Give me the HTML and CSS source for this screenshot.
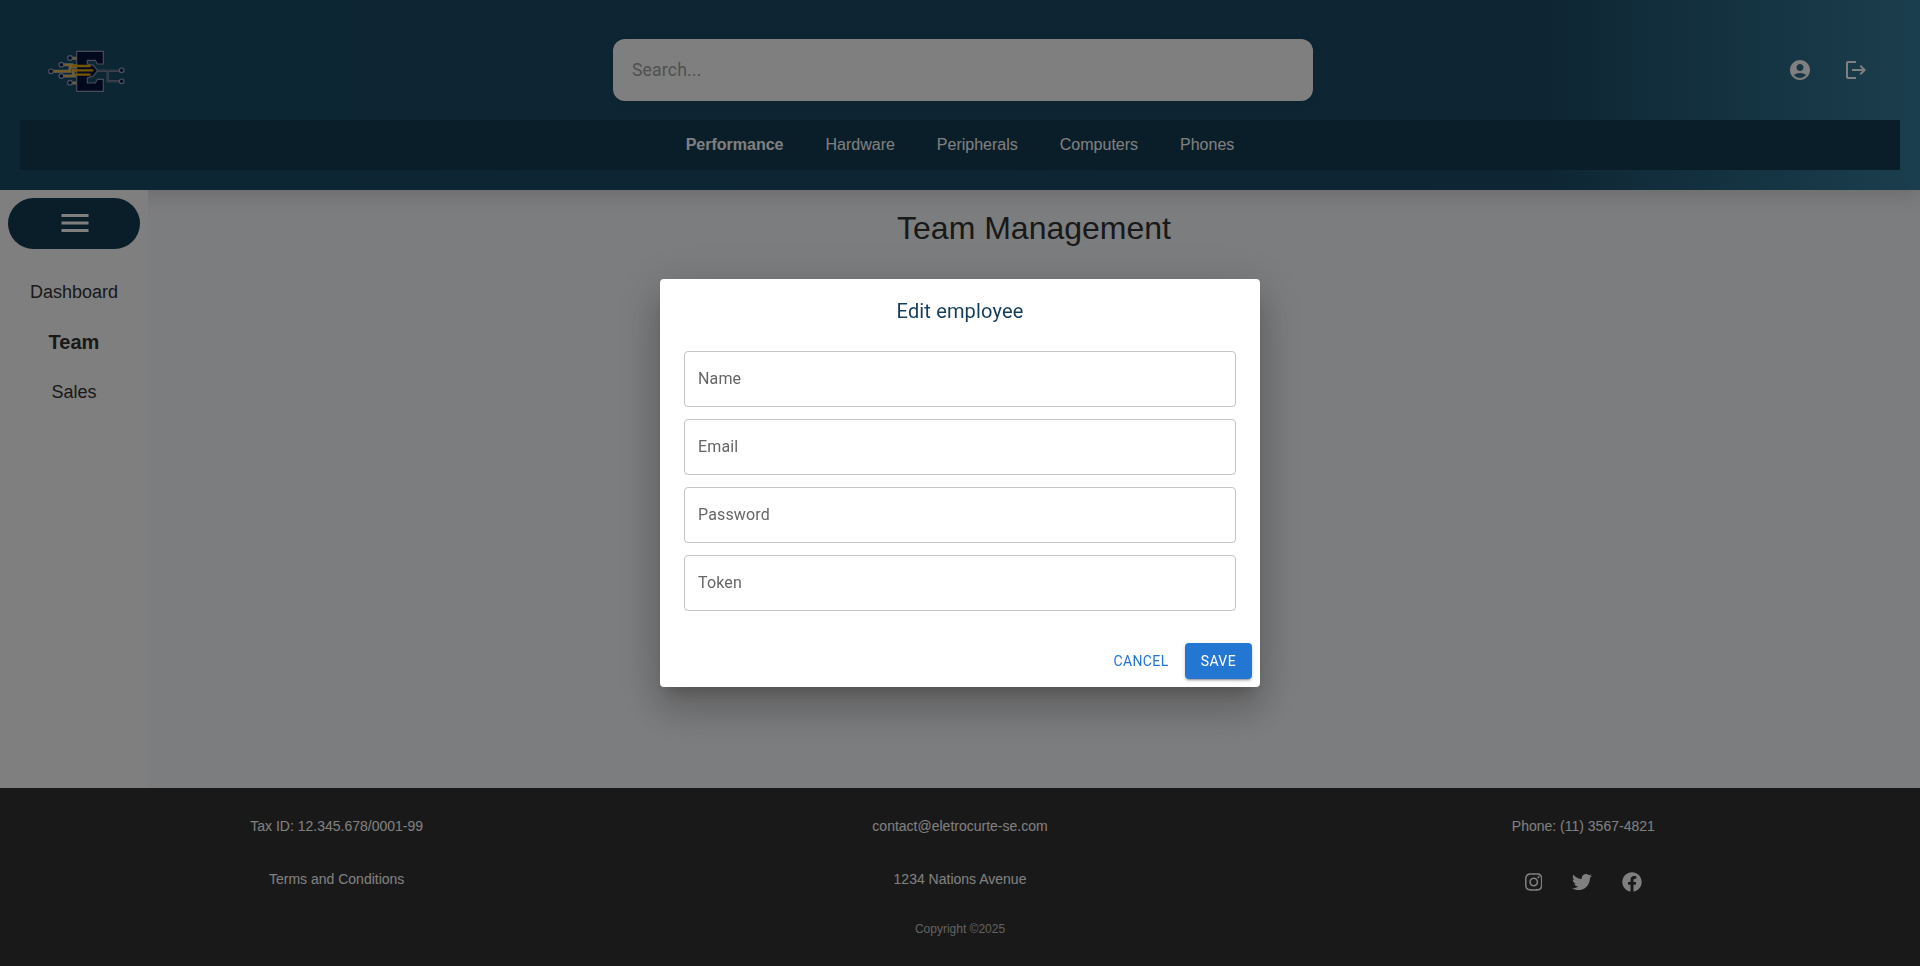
FILE: index.html
```html
<!DOCTYPE html>
<html lang="en">
<head>
<meta charset="utf-8">
<title>Team Management</title>
<link rel="stylesheet" href="styles.css">
</head>
<body>
<div class="page">
  <header class="header">
    <div class="header-row">
      <a class="logo" href="#">
        <svg width="100" height="65" viewBox="0 0 300 195" fill="none">
          <g stroke="#b9bcc6" stroke-width="9">
            <path d="M33 94H90V80H150M64 74H100M64 108H100V91H155M100 108H150M90 55H112M90 129H112"/>
          </g>
          <g stroke="#9aa3b8" stroke-width="6">
            <path d="M172 92H245M203 92V124H245"/>
          </g>
          <path d="M172 92H245M203 92V124H245" stroke="#3a4466" stroke-width="2"/>
          <path d="M110 34H190V72H172L166 61H142V72L160 76L173 92L160 108L142 114V129H166L172 118H190V154H110Z" fill="#04123f" stroke="#8f9ab0" stroke-width="3.5"/>
          <g stroke="#f0b93a" stroke-width="5">
            <path d="M36 94H90V76M64 75H112M64 108H100V91H112M95 55H109M95 129H109"/>
          </g>
          <g stroke="#e6aa08" stroke-width="7">
            <path d="M96 78H152M98 91H160M104 104H152"/>
          </g>
          <g fill="#071a4a" stroke="#9aa5bd" stroke-width="3.5">
            <circle cx="90" cy="54" r="7"/><circle cx="64" cy="74" r="7"/><circle cx="33" cy="94" r="7"/><circle cx="64" cy="108" r="7"/><circle cx="90" cy="128" r="7"/><circle cx="245" cy="91" r="7"/><circle cx="245" cy="124" r="7"/>
          </g>
        </svg>
      </a>
      <input class="search" type="text" placeholder="Search...">
      <div class="header-actions">
        <button class="icon-button"><svg width="24" height="24" viewBox="0 0 24 24"><path d="M12 2C6.48 2 2 6.48 2 12s4.48 10 10 10 10-4.48 10-10S17.52 2 12 2zm0 4c1.93 0 3.5 1.57 3.5 3.5S13.93 13 12 13s-3.5-1.57-3.5-3.5S10.07 6 12 6zm0 14c-2.03 0-4.43-.82-6.14-2.88C7.55 15.8 9.68 15 12 15s4.45.8 6.14 2.12C16.43 19.18 14.03 20 12 20z"/></svg></button>
        <button class="icon-button"><svg width="24" height="24" viewBox="0 0 24 24"><path d="m17 7-1.41 1.41L18.17 11H8v2h10.17l-2.58 2.58L17 17l5-5zM4 5h8V3H4c-1.1 0-2 .9-2 2v14c0 1.1.9 2 2 2h8v-2H4V5z"/></svg></button>
      </div>
    </div>
    <nav class="nav">
      <a class="nav-link active" href="#">Performance</a>
      <a class="nav-link" href="#">Hardware</a>
      <a class="nav-link" href="#">Peripherals</a>
      <a class="nav-link" href="#">Computers</a>
      <a class="nav-link" href="#">Phones</a>
    </nav>
  </header>
  <div class="body">
    <aside class="sidebar">
      <button class="menu-button"><svg width="36" height="36" viewBox="0 0 24 24"><path d="M3 18h18v-2H3v2zm0-5h18v-2H3v2zm0-7v2h18V6H3z"/></svg></button>
      <nav class="side-nav">
        <a class="side-link" href="#">Dashboard</a>
        <a class="side-link active" href="#">Team</a>
        <a class="side-link" href="#">Sales</a>
      </nav>
    </aside>
    <main class="main">
      <h1 class="title">Team Management</h1>
    </main>
  </div>
  <footer class="footer">
    <div class="footer-grid">
      <span>Tax ID: 12.345.678/0001-99</span>
      <span>contact@eletrocurte-se.com</span>
      <span>Phone: (11) 3567-4821</span>
      <span>Terms and Conditions</span>
      <span>1234 Nations Avenue</span>
      <div class="social">
        <svg width="17.5" height="20" viewBox="0 0 448 512"><path d="M224.1 141c-63.6 0-114.9 51.3-114.9 114.9s51.3 114.9 114.9 114.9S339 319.5 339 255.9 287.7 141 224.1 141zm0 189.6c-41.1 0-74.7-33.5-74.7-74.7s33.5-74.7 74.7-74.7 74.7 33.5 74.7 74.7-33.6 74.7-74.7 74.7zm146.4-194.3c0 14.9-12 26.8-26.8 26.8-14.9 0-26.8-12-26.8-26.8s12-26.8 26.8-26.8 26.8 12 26.8 26.8zm76.1 27.2c-1.7-35.9-9.9-67.7-36.2-93.9-26.2-26.2-58-34.4-93.9-36.2-37-2.1-147.9-2.1-184.9 0-35.8 1.7-67.6 9.9-93.9 36.1s-34.4 58-36.2 93.9c-2.1 37-2.1 147.9 0 184.9 1.7 35.9 9.9 67.7 36.2 93.9s58 34.4 93.9 36.2c37 2.1 147.9 2.1 184.9 0 35.9-1.7 67.7-9.9 93.9-36.2 26.2-26.2 34.4-58 36.2-93.9 2.1-37 2.1-147.8 0-184.8zM398.8 388c-7.8 19.6-22.9 34.7-42.6 42.6-29.5 11.7-99.5 9-132.1 9s-102.7 2.6-132.1-9c-19.6-7.8-34.7-22.9-42.6-42.6-11.7-29.5-9-99.5-9-132.1s-2.6-102.7 9-132.1c7.8-19.6 22.9-34.7 42.6-42.6 29.5-11.7 99.5-9 132.1-9s102.7-2.6 132.1 9c19.6 7.8 34.7 22.9 42.6 42.6 11.7 29.5 9 99.5 9 132.1s2.7 102.7-9 132.1z"/></svg>
        <svg width="20" height="20" viewBox="0 0 512 512"><path d="M459.37 151.716c.325 4.548.325 9.097.325 13.645 0 138.72-105.583 298.558-298.558 298.558-59.452 0-114.68-17.219-161.137-47.106 8.447.974 16.568 1.299 25.34 1.299 49.055 0 94.213-16.568 130.274-44.832-46.132-.975-84.792-31.188-98.112-72.772 6.498.974 12.995 1.624 19.818 1.624 9.421 0 18.843-1.3 27.614-3.573-48.081-9.747-84.143-51.98-84.143-102.985v-1.299c13.969 7.797 30.214 12.67 47.431 13.319-28.264-18.843-46.781-51.005-46.781-87.391 0-19.492 5.197-37.36 14.294-52.954 51.655 63.675 129.3 105.258 216.365 109.807-1.624-7.797-2.599-15.918-2.599-24.04 0-57.828 46.782-104.934 104.934-104.934 30.213 0 57.502 12.67 76.67 33.137 23.715-4.548 46.456-13.32 66.599-25.34-7.798 24.366-24.366 44.833-46.132 57.827 21.117-2.273 41.584-8.122 60.426-16.243-14.292 20.791-32.161 39.308-52.628 54.253z"/></svg>
        <svg width="20" height="20" viewBox="0 0 512 512"><path d="M504 256C504 119 393 8 256 8S8 119 8 256c0 123.78 90.69 226.38 209.25 245V327.69h-63V256h63v-54.64c0-62.15 37-96.48 93.67-96.48 27.14 0 55.52 4.84 55.52 4.84v61h-31.28c-30.8 0-40.41 19.12-40.41 38.77V256h68.78l-11 71.69h-57.78V501C413.31 482.38 504 379.78 504 256z"/></svg>
      </div>
    </div>
    <p class="copyright">Copyright ©2025</p>
  </footer>
</div>
<div class="backdrop">
  <form class="dialog">
    <h2 class="dialog-title">Edit employee</h2>
    <div class="dialog-content">
      <input class="field" type="text" placeholder="Name">
      <input class="field" type="text" placeholder="Email">
      <input class="field" type="text" placeholder="Password">
      <input class="field" type="text" placeholder="Token">
    </div>
    <div class="dialog-actions">
      <button class="button" type="button">CANCEL</button>
      <button class="button primary" type="button">SAVE</button>
    </div>
  </form>
</div>
</body>
</html>
```
FILE: styles.css
```css
* { box-sizing: border-box; }
body {
  margin: 0;
  font-family: "Liberation Sans", Arial, sans-serif;
  color: #333;
  overflow: hidden;
}
a { color: inherit; text-decoration: none; }
button { border: 0; background: none; padding: 0; font: inherit; }
svg { display: block; }

.page { display: flex; flex-direction: column; height: 966px; }

.header {
  height: 190px;
  padding: 20px;
  background: linear-gradient(90deg, #1b4c66 0%, #1c4b66 80%, #367d9c 100%);
  box-shadow: 0 4px 20px rgba(0, 0, 0, .15);
  position: relative;
}
.header-row {
  height: 100px;
  padding: 0 24px 0 20px;
  display: grid;
  grid-template-columns: 1fr 700px 1fr;
  align-items: center;
}
.logo { padding-top: 5px; }
.search {
  width: 700px;
  height: 62px;
  margin-left: 5px;
  padding: 0 19px;
  border: 0;
  border-radius: 12px;
  background: #fff;
  font: 17.6px Roboto, sans-serif;
  letter-spacing: .00938em;
  box-shadow: 0 2px 8px rgba(0, 0, 0, .1);
}
.search::placeholder { color: #a2a2a2; }
.header-actions { display: flex; justify-content: flex-end; gap: 16px; }
.icon-button { padding: 8px; fill: #fff; }
.nav {
  height: 50px;
  display: flex;
  justify-content: center;
  align-items: center;
  gap: 42px;
  background: #153d53;
  color: #fff;
  font-size: 16px;
}
.nav-link.active { font-weight: 700; }

.body { flex: 1; display: flex; }
.sidebar {
  width: 148px;
  padding: 8px;
  background: #fff;
  position: relative;
}
.menu-button {
  width: 132px;
  height: 51px;
  padding: 0 0 .5px 1px;
  border-radius: 25.5px;
  display: flex;
  align-items: center;
  justify-content: center;
  background: #153d53;
  fill: #fff;
}
.side-nav { padding-top: 18px; display: flex; flex-direction: column; }
.side-link {
  height: 50px;
  display: flex;
  align-items: center;
  justify-content: center;
  font-size: 18px;
}
.side-link.active { font-size: 20px; font-weight: 700; }
.main { flex: 1; background: #f9fafd; }
.title {
  margin: 20px 0 0;
  text-align: center;
  font-size: 32px;
  line-height: 37px;
  font-weight: 400;
}

.footer { height: 178px; background: #333; color: #fff; font-size: 14px; }
.footer-grid {
  padding: 30px 25px 0;
  display: grid;
  grid-template-columns: repeat(3, 1fr);
  grid-template-rows: 16px 21px;
  row-gap: 37px;
  justify-items: center;
}
.social { display: flex; gap: 30px; padding-top: 1px; fill: #fff; }
.footer-grid span { line-height: 16px; }
.copyright {
  margin: 30px 0 0;
  text-align: center;
  font-size: 12px;
  line-height: 14px;
  color: #c2c2c2;
}

.backdrop {
  position: fixed;
  inset: 0;
  display: flex;
  align-items: center;
  justify-content: center;
  background: rgba(0, 0, 0, .5);
  font-family: Roboto, sans-serif;
}
.dialog {
  width: 600px;
  background: #fff;
  border-radius: 4px;
  box-shadow: 0 11px 15px -7px rgba(0, 0, 0, .2), 0 24px 38px 3px rgba(0, 0, 0, .14), 0 9px 46px 8px rgba(0, 0, 0, .12);
}
.dialog-title {
  margin: 0;
  padding: 16px 24px;
  text-align: center;
  color: #153d5c;
  font-size: 20px;
  line-height: 32px;
  font-weight: 400;
  letter-spacing: .0075em;
}
.dialog-content {
  padding: 8px 24px 24px;
  display: flex;
  flex-direction: column;
  gap: 12px;
}
.field {
  height: 56px;
  padding: 0 13px 2px;
  border: 1px solid #c4c4c4;
  border-radius: 4px;
  font: 16px Roboto, sans-serif;
  letter-spacing: .00938em;
}
.field::placeholder { color: #666; }
.dialog-actions {
  padding: 8px;
  display: flex;
  justify-content: flex-end;
  gap: 8px;
}
.button {
  height: 36px;
  padding: 0 8px;
  border-radius: 4px;
  color: #2476d3;
  font-size: 14px;
  letter-spacing: .02857em;
}
.button.primary {
  padding: 0 16px;
  background: #2476d3;
  color: #fff;
  box-shadow: 0 3px 1px -2px rgba(0, 0, 0, .2), 0 2px 2px rgba(0, 0, 0, .14), 0 1px 5px rgba(0, 0, 0, .12);
}
```
